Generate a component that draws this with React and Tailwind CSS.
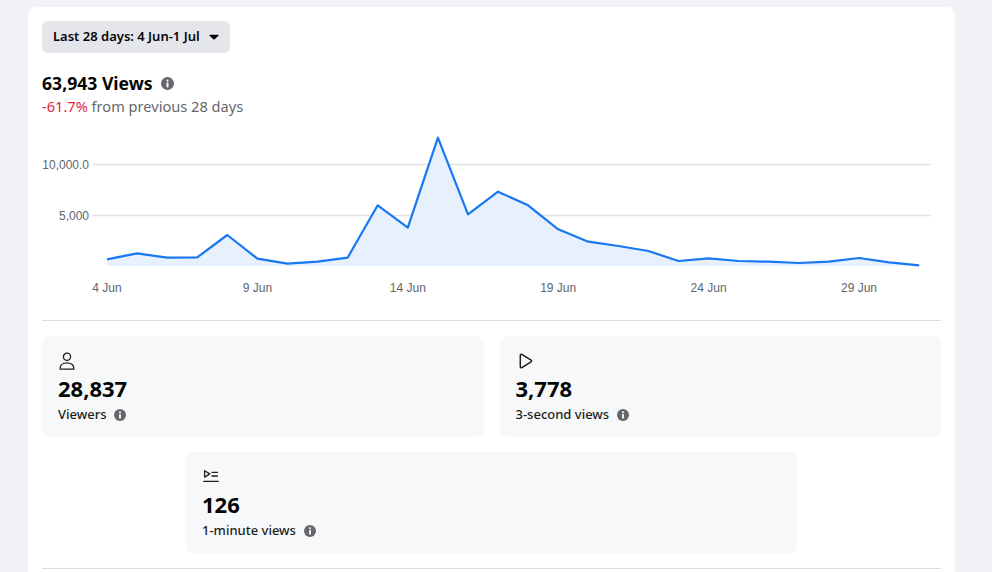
import React from 'react';

const FONT = { fontFamily: '"Noto Sans", "Liberation Sans", sans-serif' };

// daily views, 4 Jun .. 1 Jul
const views = [
  657, 1245, 814, 843, 3039, 716, 225, 422, 814, 5951, 3755, 12578, 5069, 7284,
  5951, 3598, 2382, 1961, 1471, 490, 755, 490, 422, 294, 422, 784, 363, 69,
];

const xTicks = [
  { i: 0, label: '4 Jun' },
  { i: 5, label: '9 Jun' },
  { i: 10, label: '14 Jun' },
  { i: 15, label: '19 Jun' },
  { i: 20, label: '24 Jun' },
  { i: 25, label: '29 Jun' },
];

const px = (i) => 65 + i * 30.08;
const py = (v) => 147 - v * 0.0102;

const InfoIcon = ({ size = 12 }) => (
  <svg width={size} height={size} viewBox="0 0 12 12" className="shrink-0">
    <circle cx="6" cy="6" r="6" fill="#65676b" />
    <circle cx="6" cy="3.3" r="1" fill="#fff" />
    <rect x="5.1" y="5" width="1.8" height="4.6" rx="0.6" fill="#fff" />
  </svg>
);

const ViewsChart = () => {
  const pts = views.map((v, i) => `${px(i).toFixed(1)},${py(v).toFixed(1)}`);
  const line = `M${pts.join(' L')}`;
  const area = `${line} L${px(views.length - 1).toFixed(1)},147 L${px(0)},147 Z`;
  return (
    <svg width="899" height="190" viewBox="0 0 899 190" className="block mt-[2px]">
      <line x1="51" x2="889" y1="45.5" y2="45.5" stroke="#dfe1e5" strokeWidth="1.5" />
      <line x1="51" x2="889" y1="96.5" y2="96.5" stroke="#dfe1e5" strokeWidth="1.5" />
      <g fontFamily="Liberation Sans, Arial, sans-serif" fontSize="12" fill="#606770">
        <text x="47" y="49.5" textAnchor="end">10,000.0</text>
        <text x="47" y="100.5" textAnchor="end">5,000</text>
        {xTicks.map((t) => (
          <text key={t.i} x={px(t.i)} y="172.5" textAnchor="middle">
            {t.label}
          </text>
        ))}
      </g>
      <path d={area} fill="#e7f0fd" />
      <path d={line} fill="none" stroke="#1877f2" strokeWidth="2.2" strokeLinejoin="round" />
    </svg>
  );
};

const PersonIcon = () => (
  <svg width="18" height="18" viewBox="0 0 18 18" fill="none" stroke="#1c1e21" strokeWidth="1.3">
    <circle cx="9" cy="4.8" r="3.6" />
    <path d="M2.2 17.2v-1.2c0-3 2.9-5.1 6.8-5.1s6.8 2.1 6.8 5.1v1.2z" strokeLinejoin="round" />
  </svg>
);

const PlayIcon = () => (
  <svg width="18" height="18" viewBox="0 0 18 18" fill="none" stroke="#1c1e21" strokeWidth="1.5">
    <path d="M4.3 3.2c0-.8.8-1.2 1.5-.8l9.3 5.8c.6.4.6 1.2 0 1.6l-9.3 5.8c-.7.4-1.5 0-1.5-.8z" strokeLinejoin="round" />
  </svg>
);

const MinuteIcon = () => (
  <svg width="18" height="18" viewBox="0 0 18 18" fill="none" stroke="#1c1e21" strokeWidth="1.3">
    <path d="M2.6 2.7v6.4l5.2-3.2z" strokeLinejoin="round" />
    <path d="M10 4.4h5.4M10 8h5.4M1.8 13.4h14.4" strokeLinecap="round" />
  </svg>
);

const StatCard = ({ icon, value, label, className = '' }) => (
  <div className={`bg-[#f7f8fa] rounded-lg pl-4 pr-4 pt-4 pb-[13px] ${className}`}>
    <div className="h-[18px] flex items-center">{icon}</div>
    <div className="mt-1 text-[22px] leading-[28px] font-bold text-[#050505]">{value}</div>
    <div className="mt-1 flex items-center gap-2 h-[18px]">
      <span className="text-[13px] font-medium text-[#1c1e21]">{label}</span>
      <InfoIcon />
    </div>
  </div>
);

export default function App() {
  return (
    <div className="min-h-screen bg-[#f0f2f5] pt-[7px] pl-[28px] pr-[37px]" style={FONT}>
      <div className="bg-white rounded-lg w-[927px] px-[14px] pt-[14px] pb-0 overflow-hidden">
        <button className="h-8 px-[11px] rounded-md bg-[#e4e6eb] flex items-center gap-[9px] text-[13px] font-semibold text-[#050505]">
          <span>Last 28 days: 4 Jun-1 Jul</span>
          <svg width="10" height="6" viewBox="0 0 10 6">
            <path d="M1 0.8h8c.5 0 .8.6.4 1L5.4 5.4a.6.6 0 0 1-.8 0L.6 1.8C.2 1.4.5.8 1 .8z" fill="#050505" />
          </svg>
        </button>

        <div className="mt-[18px] flex items-center gap-2 h-6">
          <span className="text-[17.6px] font-bold text-[#050505]">63,943 Views</span>
          <InfoIcon size={13} />
        </div>
        <div className="text-[14.6px] leading-[22px] text-[#65676b]">
          <span className="text-[#e41e3f]">-61.7%</span> from previous 28 days
        </div>

        <ViewsChart />

        <div className="mt-[11px] border-t border-[#dadde1]" />

        <div className="mt-[15px] grid grid-cols-2 gap-4">
          <StatCard icon={<PersonIcon />} value="28,837" label="Viewers" />
          <StatCard icon={<PlayIcon />} value="3,778" label="3-second views" />
        </div>
        <div className="mt-[15px] flex justify-center">
          <StatCard icon={<MinuteIcon />} value="126" label="1-minute views" className="w-[611px]" />
        </div>

        <div className="mt-[15px] border-t border-[#dadde1] h-10" />
      </div>
    </div>
  );
}
